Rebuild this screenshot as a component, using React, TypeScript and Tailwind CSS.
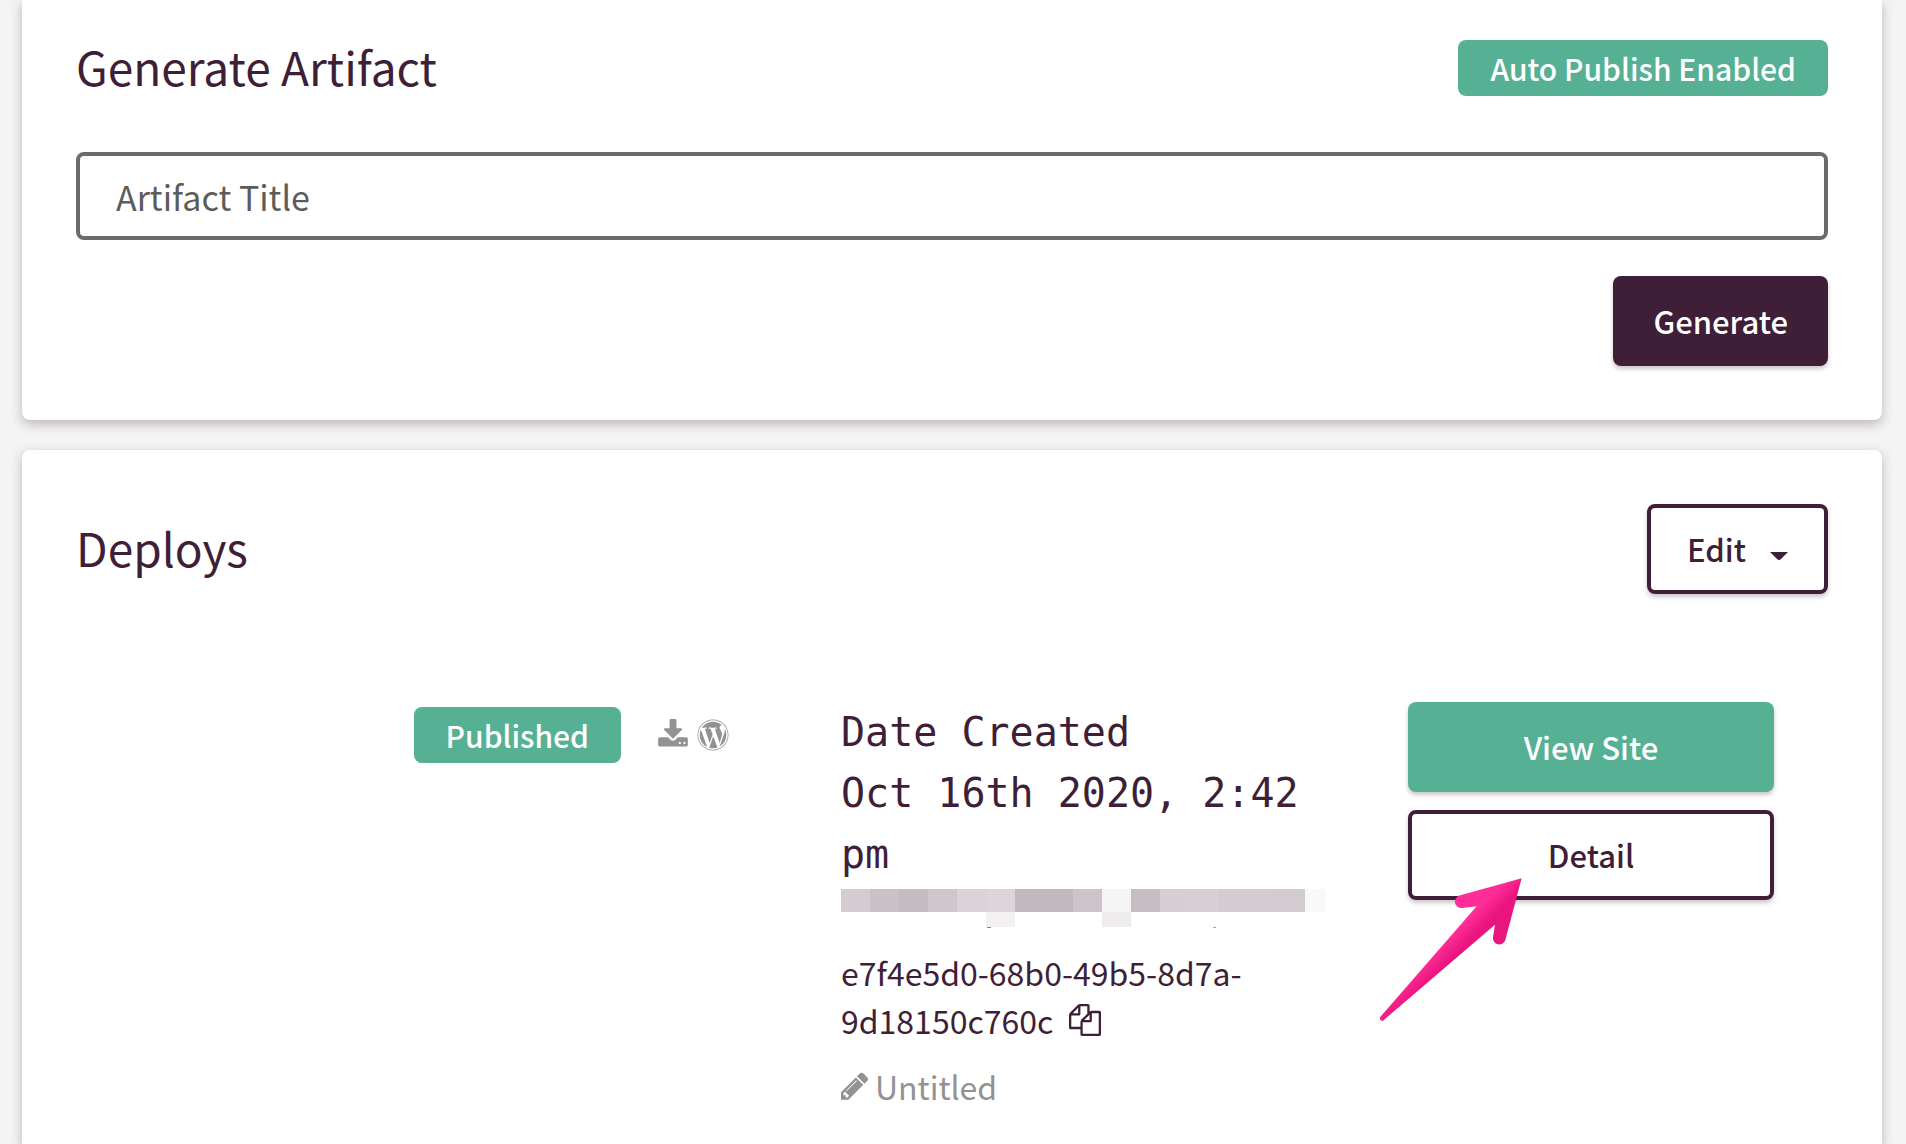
import { useState, FormEvent, ReactNode } from 'react';
import { FaWordpress } from 'react-icons/fa';

const BLOCK_COLORS = [
  '#d5cbd2', '#cbc2c7', '#c5bbc2', '#d0c6cd', '#dad4d8', '#dcd6da', '#c2b8bf', '#c2b8bf', '#cdc3cb',
  '#f5f5f5', '#c7bdc5', '#d5cfd3', '#d6d0d4', '#d3cdd1', '#d3cdd1', '#d2cbd0', '#f9f9f9',
];

function Glyph({ d }: { d: string }) {
  return (
    <svg viewBox="0 0 1792 1792" fill="currentColor" className="size-8 shrink-0" aria-hidden="true">
      <path d={d} />
    </svg>
  );
}

const downloadPath =
  'M1344 1344q0-26-19-45t-45-19-45 19-19 45 19 45 45 19 45-19 19-45zm256 0q0-26-19-45t-45-19-45 19-19 45 19 45 45 19 45-19 19-45zm128-224v320q0 40-28 68t-68 28h-1472q-40 0-68-28t-28-68v-320q0-40 28-68t68-28h465l135 136q58 56 136 56t136-56l136-136h464q40 0 68 28t28 68zm-325-569q17 41-14 70l-448 448q-18 19-45 19t-45-19l-448-448q-31-29-14-70 17-39 59-39h256v-448q0-26 19-45t45-19h256q26 0 45 19t19 45v448h256q42 0 59 39z';
const copyPath =
  'M1696 384q40 0 68 28t28 68v1216q0 40-28 68t-68 28h-960q-40 0-68-28t-28-68v-288h-544q-40 0-68-28t-28-68v-672q0-40 20-88t48-76l408-408q28-28 76-48t88-20h416q40 0 68 28t28 68v328q68-40 128-40h416zm-544 213l-299 299h299v-299zm-640-384l-299 299h299v-299zm196 647l316-316v-416h-384v416q0 40-28 68t-68 28h-416v640h512v-256q0-40 20-88t48-76zm956 804v-1152h-384v416q0 40-28 68t-68 28h-416v640h896z';
const pencilPath =
  'M491 1536l91-91-235-235-91 91v107h128v128h107zm523-928q0-22-22-22-10 0-17 7l-542 542q-7 7-7 17 0 22 22 22 10 0 17-7l542-542q7-7 7-17zm-54-192l416 416-832 832h-416v-416zm683 96q0 53-37 90l-166 166-416-416 166-165q36-38 90-38 53 0 91 38l235 234q37 39 37 91z';

function Badge({ children }: { children: ReactNode }) {
  return (
    <span className="flex h-14 items-center rounded-lg bg-[#56b194] px-8 text-[30px] leading-none font-medium text-white">
      {children}
    </span>
  );
}

// hidden user name, drawn as coarse blocks
function Redacted() {
  return (
    <svg
      width="485"
      height="39"
      viewBox="0 0 485 39"
      shapeRendering="crispEdges"
      className="mt-1"
      role="img"
      aria-label="Hidden"
    >
      {BLOCK_COLORS.map((color, i) => (
        <rect key={i} x={i * 29} width={i === 16 ? 21 : 29} height="23" fill={color} />
      ))}
      <rect x="145" y="23" width="29" height="15" fill="#f2f0f1" />
      <rect x="261" y="23" width="29" height="15" fill="#eeeced" />
      <rect x="146" y="38" width="4" height="1" fill="#8d7d88" />
      <rect x="372" y="38" width="3" height="1" fill="#a99fa6" />
    </svg>
  );
}

function Arrow() {
  return (
    <svg
      viewBox="57 593 432 432"
      className="pointer-events-none absolute top-[68px] -left-[29px] size-36"
      aria-hidden="true"
    >
      <defs>
        <linearGradient id="arrow" gradientUnits="userSpaceOnUse" x1="300" y1="740" x2="335" y2="775">
          <stop offset="0" stopColor="#ff2d96" />
          <stop offset="1" stopColor="#ea147f" />
        </linearGradient>
      </defs>
      <path
        d="M485 594L301 645A19 19 0 0 0 307 683L350 678L60 1011Q58 1021 68 1022L405 733L399 771A19 19 0 0 0 436 779Z"
        fill="url(#arrow)"
      />
    </svg>
  );
}

export default function App() {
  const [title, setTitle] = useState<string>('');

  const handleSubmit = (e: FormEvent) => {
    e.preventDefault();
    setTitle('');
  };

  return (
    <div className="flex min-h-screen flex-col gap-[30px] bg-[#f4f4f4] pr-6 pl-[22px] font-['Noto_Sans_CJK_SC',sans-serif] text-[#3f1f37]">
      <section className="rounded-b-lg bg-white px-[54px] pt-10 pb-[54px] shadow-[0_4px_12px_rgba(63,31,55,0.3)]">
        <div className="flex h-14 items-center justify-between">
          <h2 className="pb-1 text-[46px] leading-none">Generate Artifact</h2>
          <Badge>Auto Publish Enabled</Badge>
        </div>
        <form onSubmit={handleSubmit} className="mt-14 flex flex-col items-end gap-9">
          <input
            type="text"
            aria-label="Artifact Title"
            placeholder="Artifact Title"
            value={title}
            onChange={(e) => setTitle(e.target.value)}
            className="h-[88px] w-full rounded-lg border-4 border-[#6b6b6b] px-9 text-[34px] text-[#3f1f37] placeholder:text-[#5c5c5c]"
          />
          <button
            type="submit"
            className="h-[90px] rounded-lg bg-[#3f1f37] px-10 text-[31px] font-medium text-white shadow-[0_3px_4px_rgba(63,31,55,0.25)]"
          >
            Generate
          </button>
        </form>
      </section>

      <section className="flex-1 rounded-t-lg bg-white px-[54px] pt-[54px] shadow-[0_4px_12px_rgba(63,31,55,0.3)]">
        <div className="flex items-center justify-between">
          <h2 className="pb-1 text-[46px] leading-none">Deploys</h2>
          <button
            type="button"
            className="flex h-[90px] items-center gap-6 rounded-lg border-4 border-[#3f1f37] px-9 text-[31px] font-medium shadow-[0_3px_4px_rgba(63,31,55,0.25)]"
          >
            Edit
            <svg width="18" height="24" viewBox="0 0 18 24" fill="currentColor" aria-hidden="true">
              <path d="M0 15h18l-7 7q-2 2-4 0z" />
            </svg>
          </button>
        </div>

        <div className="mt-[54px] grid grid-cols-[711fr_567fr_366fr] px-[54px] pt-[54px]">
          <div className="flex h-[66px] items-center justify-end gap-9 pr-28">
            <Badge>Published</Badge>
            <div className="flex gap-2 text-[#929292]">
              <Glyph d={downloadPath} />
              <FaWordpress className="size-8" />
            </div>
          </div>

          <div className="pr-20">
            <p className="font-['DejaVu_Sans_Mono',monospace] text-[40px] leading-[61px]">
              Date Created
              <br />
              Oct 16th 2020, 2:42 pm
            </p>
            <Redacted />
            <p className="mt-5 text-[32px] leading-[48px]">
              e7f4e5d0-68b0-49b5-8d7a-
              <span className="flex items-center gap-4">
                9d18150c760c
                <button type="button" aria-label="Copy id">
                  <Glyph d={copyPath} />
                </button>
              </span>
            </p>
            <p className="mt-[18px] flex items-center gap-1.5 text-[32px] leading-[48px] text-[#929292]">
              <svg viewBox="128 0 1568 1792" fill="currentColor" className="h-8 w-7 shrink-0" aria-hidden="true">
                <path d={pencilPath} />
              </svg>
              Untitled
            </p>
          </div>

          <div className="flex flex-col gap-[18px]">
            <button
              type="button"
              className="h-[90px] rounded-lg bg-[#56b194] text-[31px] font-medium text-white shadow-[0_3px_4px_rgba(63,31,55,0.25)]"
            >
              View Site
            </button>
            <div className="relative">
              <button
                type="button"
                className="h-[90px] w-full rounded-lg border-4 border-[#3f1f37] text-[31px] font-medium shadow-[0_3px_4px_rgba(63,31,55,0.25)]"
              >
                Detail
              </button>
              <Arrow />
            </div>
          </div>
        </div>
      </section>
    </div>
  );
}
